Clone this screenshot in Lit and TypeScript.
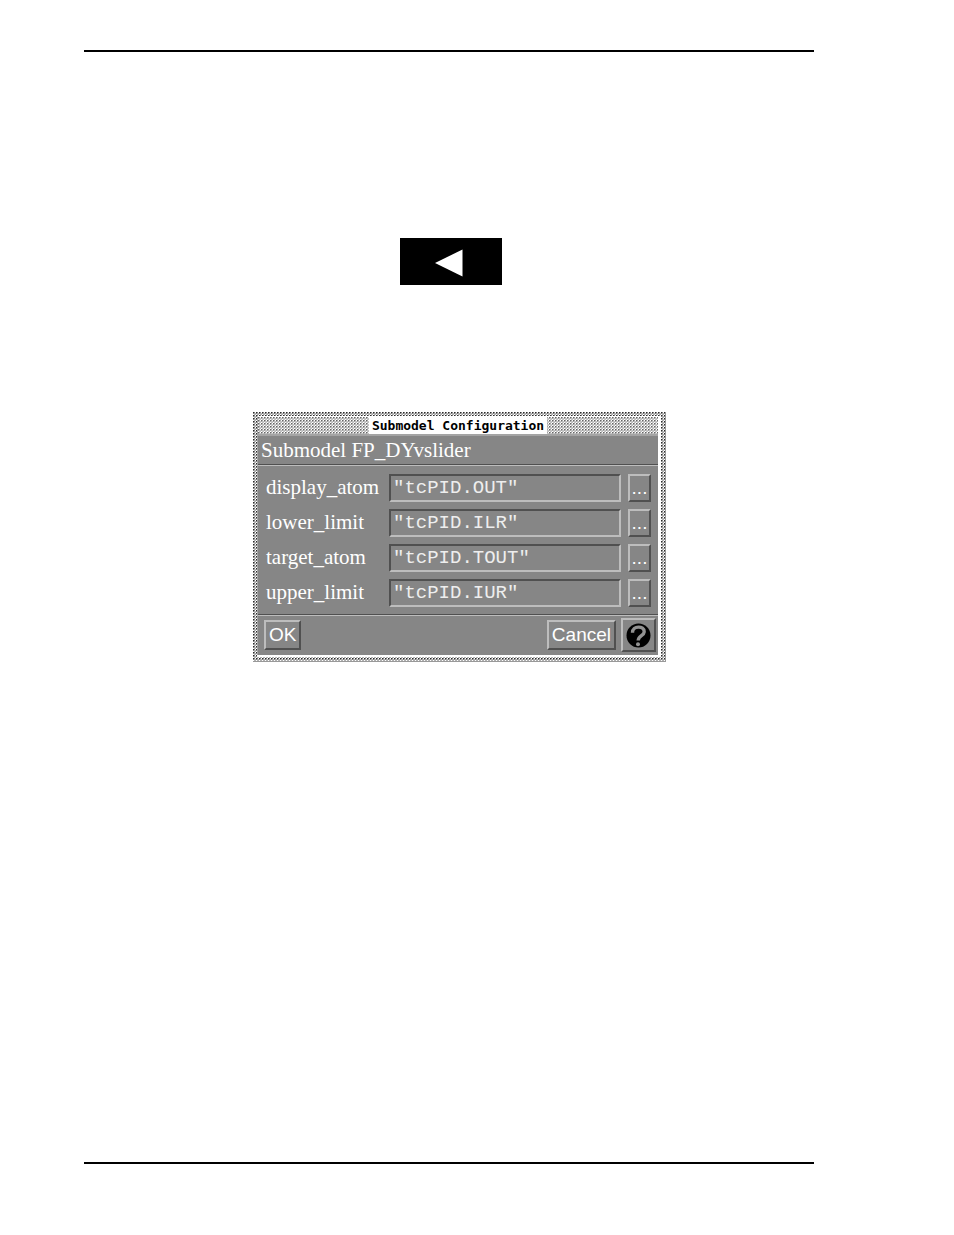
import { LitElement, html, css } from "lit";
import { customElement, state } from "lit/decorators.js";

interface Field {
  name: string;
  value: string;
}

@customElement("submodel-dialog")
export class SubmodelDialog extends LitElement {
  static styles = css`
    :host {
      display: block;
      --face: #868686;
      --light: #bdbdbd;
      --dark: #505050;
    }
    .frame {
      box-sizing: border-box;
      padding: 4px;
      background:
        radial-gradient(circle at 17% 17%, #2a2a2a 20%, transparent 40%) 0 0 / 3px 3px,
        radial-gradient(circle at 67% 67%, #666 10%, transparent 40%) 0 0 / 3px 3px,
        #fff;
      border-bottom: 1px solid #999;
      border-right: 1px solid #999;
    }
    .inner {
      border-right: 3px solid #fff;
      border-bottom: 2px solid #fff;
    }
    .title {
      display: flex;
      justify-content: center;
      height: 18px;
      border-top: 1px solid #fff;
      border-left: 1px solid #a4a4a4;
      box-sizing: border-box;
      background:
        radial-gradient(circle at 17% 17%, #666 20%, transparent 40%) 0 0 / 3px 3px,
        radial-gradient(circle at 67% 67%, #888 10%, transparent 40%) 0 0 / 3px 3px,
        #fff;
    }
    .title h1 {
      margin: 0;
      padding: 0 3px;
      background: #fff;
      color: #000;
      font: bold 13px/17px "DejaVu Sans Mono", monospace;
    }
    .body {
      background: var(--face);
      color: #fff;
      border-top: 2px solid #a4a4a4;
      border-left: 1px solid #a4a4a4;
      font: 21px/28px "Liberation Serif", serif;
    }
    .heading {
      margin: 0;
      padding: 0 3px;
      font: inherit;
      border-bottom: 1px solid var(--dark);
    }
    .fields {
      display: grid;
      gap: 7px;
      padding: 8px 7px 7px 8px;
      border-top: 1px solid var(--light);
      border-bottom: 1px solid var(--dark);
    }
    .row {
      display: grid;
      grid-template-columns: 116px 1fr 23px;
      gap: 7px;
      height: 28px;
    }
    label {
      line-height: 26px;
    }
    input,
    button {
      box-sizing: border-box;
      margin: 0;
      min-width: 0;
      border-radius: 0;
      background: var(--face);
      color: #fff;
      border: 2px solid;
    }
    input {
      width: 100%;
      height: 28px;
      padding: 0 2px;
      border-color: var(--dark) var(--light) var(--light) var(--dark);
      color: #eee;
      font: 19px/24px "Liberation Mono", monospace;
    }
    button {
      padding: 0;
      border-color: var(--light) var(--dark) var(--dark) var(--light);
      font: 19px/24px "Liberation Sans", sans-serif;
    }
    .actions {
      display: flex;
      align-items: center;
      gap: 5px;
      padding: 2px 2px 3px 6px;
      border-top: 1px solid var(--light);
    }
    .push {
      height: 30px;
      padding: 0 3px;
    }
    .cancel {
      margin-left: auto;
    }
    .help {
      display: grid;
      place-items: center;
      width: 35px;
      height: 34px;
    }
    svg {
      display: block;
    }
  `;

  @state() private fields: Field[] = [
    { name: "display_atom", value: '"tcPID.OUT"' },
    { name: "lower_limit", value: '"tcPID.ILR"' },
    { name: "target_atom", value: '"tcPID.TOUT"' },
    { name: "upper_limit", value: '"tcPID.IUR"' },
  ];

  render() {
    return html`
      <section class="frame">
        <div class="inner">
          <header class="title"><h1>Submodel Configuration</h1></header>
          <div class="body">
            <h2 class="heading">Submodel FP_DYvslider</h2>
            <div class="fields">
              ${this.fields.map(
                (f) => html`
                  <div class="row">
                    <label for=${f.name}>${f.name}</label>
                    <input id=${f.name} type="text" .value=${f.value} />
                    <button type="button" aria-label="Browse ${f.name}">...</button>
                  </div>
                `
              )}
            </div>
            <footer class="actions">
              <button class="push" type="button">OK</button>
              <button class="push cancel" type="button">Cancel</button>
              <button class="help" type="button" aria-label="Help">
                <svg width="25" height="25" viewBox="0 0 25 25" aria-hidden="true">
                  <circle cx="12.5" cy="12.5" r="12" fill="#000" />
                  <path
                    d="M6.5 9.8C6.2 2.4 18.6 2.4 18.2 8.8C18 12.8 12.2 12.6 12.2 17.6"
                    fill="none"
                    stroke="#929292"
                    stroke-width="3.4"
                  />
                  <circle cx="12" cy="21.2" r="2" fill="#929292" />
                </svg>
              </button>
            </footer>
          </div>
        </div>
      </section>
    `;
  }
}

@customElement("app-root")
export class AppRoot extends LitElement {
  static styles = css`
    :host {
      display: block;
      background: #fff;
    }
    .page {
      box-sizing: border-box;
      min-height: 100vh;
      display: flex;
      flex-direction: column;
      padding: 50px 140px 71px 84px;
    }
    .rule {
      width: 100%;
      margin: 0;
      border: 0;
      border-top: 2px solid #000;
    }
    .content {
      flex: 1;
      display: flex;
      flex-direction: column;
      align-items: center;
      padding-top: 186px;
    }
    .arrow {
      display: grid;
      place-items: center;
      box-sizing: border-box;
      width: 102px;
      height: 47px;
      margin: 0 0 127px 4px;
      padding: 0;
      border: 0;
      border-radius: 0;
      background: #000;
    }
    submodel-dialog {
      width: 100%;
      max-width: 413px;
      margin-left: 21px;
    }
  `;

  render() {
    return html`
      <main class="page">
        <hr class="rule" />
        <div class="content">
          <button class="arrow" type="button" aria-label="Previous">
            <svg width="32" height="33" viewBox="0 0 32 33" aria-hidden="true">
              <path d="M0 18L27.5 4.5V31.5Z" fill="#fff" />
            </svg>
          </button>
          <submodel-dialog></submodel-dialog>
        </div>
        <hr class="rule" />
      </main>
    `;
  }
}
